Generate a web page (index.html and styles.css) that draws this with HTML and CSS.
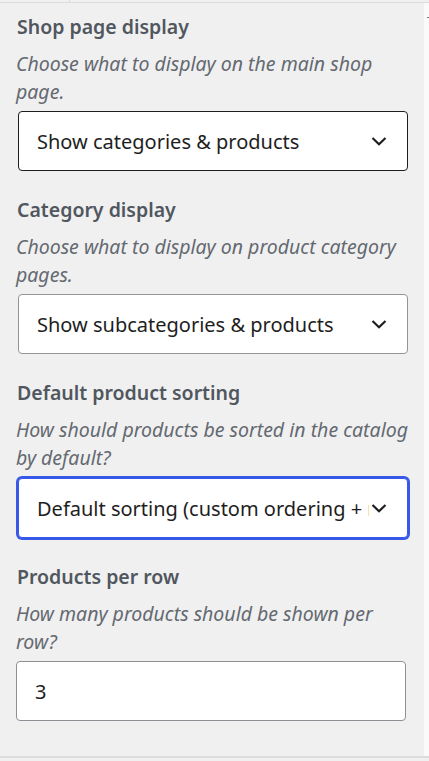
FILE: index.html
```html
<!DOCTYPE html>
<html lang="en">
<head>
    <meta charset="UTF-8">
    <meta name="viewport" content="width=device-width, initial-scale=1.0">
    <title>Catalog settings</title>
    <link rel="stylesheet" href="styles.css">
</head>
<body>
    <div class="topbar">
        <div class="topbar-tab"></div>
    </div>
    <div class="panel">
        <div class="settings">
            <div class="field">
                <h3>Shop page display</h3>
                <p class="help">Choose what to display on the main shop page.</p>
                <div class="select select-dark">
                    <span>Show categories &amp; products</span>
                    <svg class="chevron" viewBox="0 0 24 24" width="24" height="24"><path d="M5.5 9l6.5 6.2L18.5 9" fill="none" stroke="#1e1e1e" stroke-width="2.2"/></svg>
                </div>
            </div>
            <div class="field">
                <h3>Category display</h3>
                <p class="help">Choose what to display on product category pages.</p>
                <div class="select">
                    <span>Show subcategories &amp; products</span>
                    <svg class="chevron" viewBox="0 0 24 24" width="24" height="24"><path d="M5.5 9l6.5 6.2L18.5 9" fill="none" stroke="#1e1e1e" stroke-width="2.2"/></svg>
                </div>
            </div>
            <div class="field">
                <h3>Default product sorting</h3>
                <p class="help">How should products be sorted in the catalog by default?</p>
                <div class="select select-focus">
                    <span>Default sorting (custom ordering + name)</span>
                    <svg class="chevron" viewBox="0 0 24 24" width="24" height="24"><path d="M5.5 9l6.5 6.2L18.5 9" fill="none" stroke="#1e1e1e" stroke-width="2.2"/></svg>
                </div>
            </div>
            <div class="field">
                <h3>Products per row</h3>
                <p class="help">How many products should be shown per row?</p>
                <div class="text-input">3</div>
            </div>
        </div>
        <div class="side-strip"><span class="dot"></span></div>
    </div>
    <div class="bottombar"></div>
</body>
</html>
```
FILE: styles.css
```css
body {
    margin: 0;
    padding: 0;
    background: #f0f0f1;
    font-family: "Noto Sans", "Open Sans", sans-serif;
    color: #1e1e1e;
    width: 429px;
    height: 761px;
    overflow: hidden;
}
.topbar {
    height: 2px;
    border-bottom: 1px solid #dcdcde;
    display: flex;
}
.topbar-tab {
    width: 69px;
    border-right: 1px solid #dcdcde;
}
.panel {
    display: flex;
    height: 753px;
    border-bottom: 2px solid #dcdcde;
}
.settings {
    flex: 1;
    padding: 11px 0 0 17px;
}
.side-strip {
    width: 5px;
    background: #fafafa;
    position: relative;
}
.dot {
    position: absolute;
    top: 14px;
    right: 0;
    width: 2px;
    height: 1px;
    background: #777;
}
.bottombar {
    height: 3px;
    background: #f0f0f1;
}
.field {
    margin-bottom: 26px;
    width: 391px;
}
h3 {
    margin: 0;
    font-size: 19.5px;
    line-height: 26px;
    font-weight: 600;
    color: #50575e;
}
.help {
    margin: 10px 0 5px -1px;
    width: 398px;
    font-size: 19.5px;
    line-height: 28px;
    font-style: italic;
    color: #646970;
}
.select {
    margin-left: 1px;
    height: 58px;
    border: 1px solid #949494;
    border-radius: 4px;
    background: #fff;
    display: flex;
    align-items: center;
    justify-content: space-between;
    padding: 0 16px 0 18px;
    font-size: 20px;
    overflow: hidden;
    white-space: nowrap;
}
.select span {
    overflow: hidden;
    flex: 1;
}
.select-dark {
    border-color: #1e1e1e;
}
.select-focus {
    border-color: #3858e9;
    box-shadow: 0 0 0 2px #3858e9;
    margin-top: 6px;
}
.chevron {
    flex: none;
    margin-left: -2px;
}
.text-input {
    margin-top: 3px;
    height: 58px;
    width: 370px;
    border: 1px solid #8c8f94;
    border-radius: 4px;
    background: #fff;
    display: flex;
    align-items: center;
    padding-left: 18px;
    font-size: 20px;
    margin-left: -1px;
}
```
